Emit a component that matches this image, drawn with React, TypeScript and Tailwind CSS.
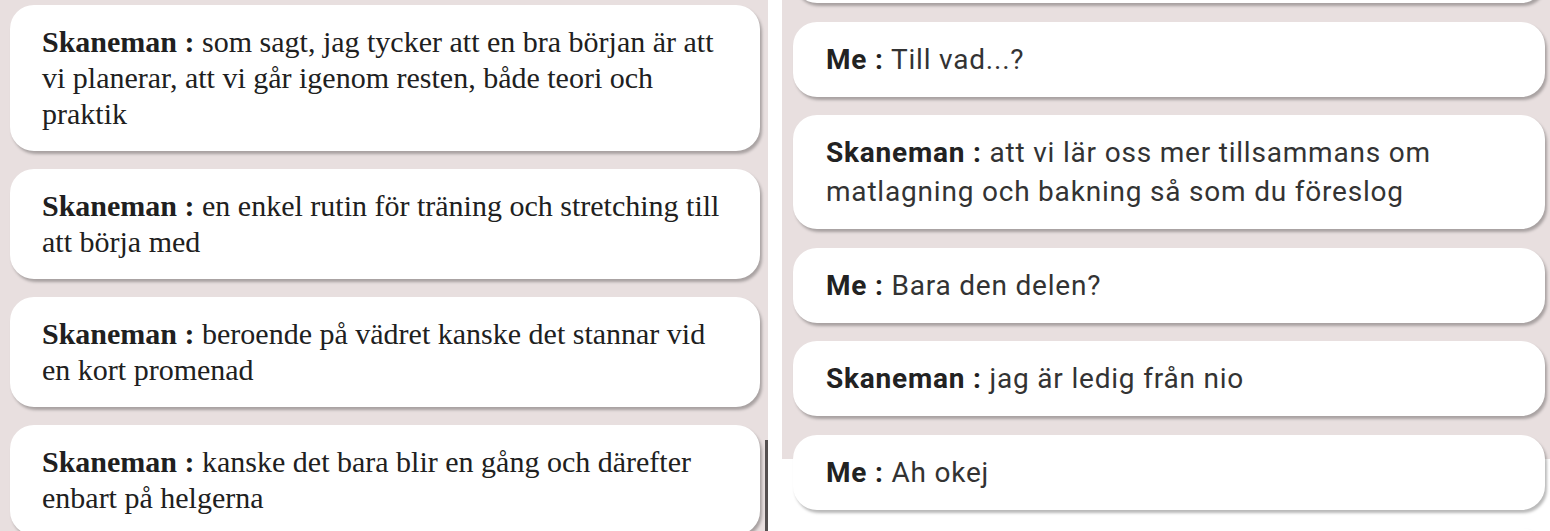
import React from "react";

type Msg = { name: string; text: string };

const left: Msg[] = [
  { name: "Skaneman", text: "som sagt, jag tycker att en bra början är att vi planerar, att vi går igenom resten, både teori och praktik" },
  { name: "Skaneman", text: "en enkel rutin för träning och stretching till att börja med" },
  { name: "Skaneman", text: "beroende på vädret kanske det stannar vid en kort promenad" },
  { name: "Skaneman", text: "kanske det bara blir en gång och därefter enbart på helgerna" },
];

const right: Msg[] = [
  { name: "Me", text: "Till vad...?" },
  { name: "Skaneman", text: "att vi lär oss mer tillsammans om matlagning och bakning så som du föreslog" },
  { name: "Me", text: "Bara den delen?" },
  { name: "Skaneman", text: "jag är ledig från nio" },
  { name: "Me", text: "Ah okej" },
];

export default function App() {
  return (
    <div className="w-[1550px] h-[531px] overflow-hidden flex bg-white">
      <div className="w-[768px] h-full bg-[#e8dfdf] flex flex-col gap-[18px] pl-[10px] pr-[8px] pt-[5px] relative">
        {left.map((m, i) => (
          <div
            key={i}
            className="shrink-0 w-[750px] bg-white rounded-[24px] shadow-[2px_3px_3px_rgba(0,0,0,0.28)] pl-[32px] pr-[24px] py-[19px] text-[30px] leading-[36px] text-[#202020]"
            style={{ fontFamily: '"Liberation Serif", "Times New Roman", serif' }}
          >
            <p>
              <b>{m.name} :</b> {m.text}
            </p>
          </div>
        ))}
        <div className="absolute right-0 top-[440px] w-[3px] h-[91px] bg-[#555050]" />
      </div>
      <div className="w-[14px] h-full bg-white" />
      <div className="flex-1 h-full bg-[#e8dfdf] flex flex-col gap-[18.5px] pl-[11px] pr-[5px] -mt-[72px]">
        <div className="h-[75px] shrink-0 w-[752px] bg-white rounded-[24px] shadow-[2px_3px_3px_rgba(0,0,0,0.28)]" />
        {right.map((m, i) => (
          <div
            key={i}
            className="min-h-[75px] shrink-0 w-[752px] bg-white rounded-[24px] shadow-[2px_3px_3px_rgba(0,0,0,0.28)] pl-[33px] pr-[12px] py-[18px] flex items-center text-[28px] leading-[39px] tracking-[0.8px] text-[#333]"
            style={{ fontFamily: 'Roboto, "Noto Sans", sans-serif' }}
          >
            <p>
              <b className="font-bold text-[#222]">{m.name} :</b> {m.text}
            </p>
          </div>
        ))}
        <div className="h-[75px] shrink-0 w-[752px] bg-white rounded-[24px] shadow-[2px_3px_3px_rgba(0,0,0,0.28)]" />
      </div>
    </div>
  );
}
